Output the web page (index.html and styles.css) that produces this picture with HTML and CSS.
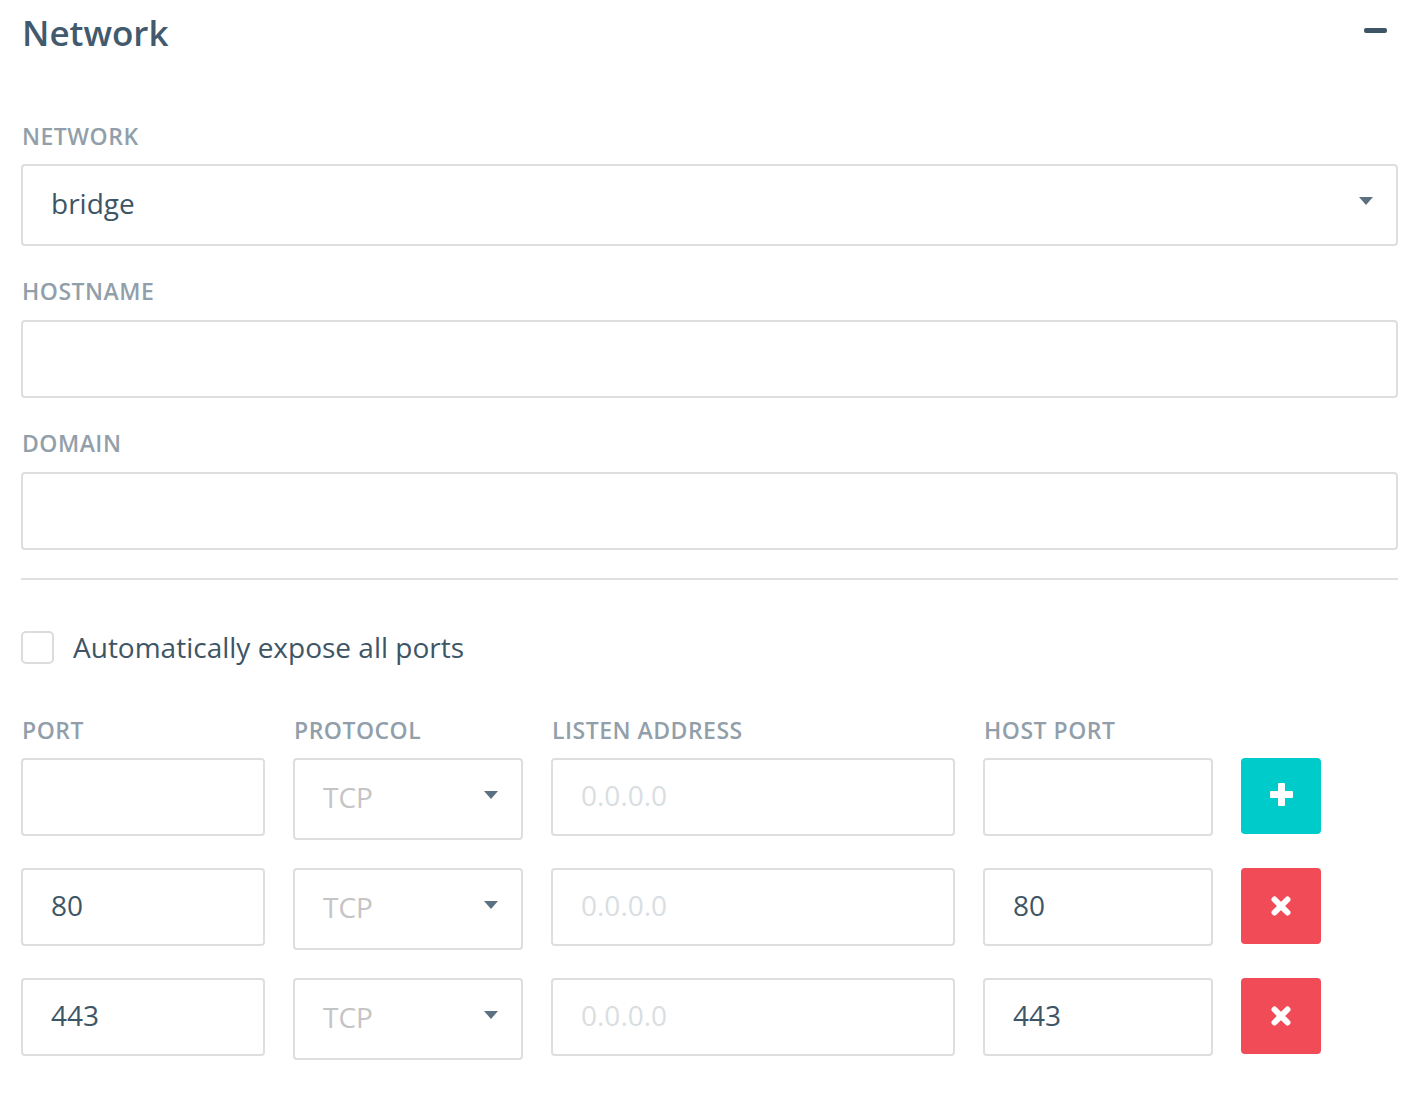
FILE: index.html
```html
<!DOCTYPE html>
<html>
<head>
<meta charset="utf-8">
<link rel="stylesheet" href="styles.css">
</head>
<body>
<div class="panel">
  <div class="panel-head">
    <h1 class="title">Network</h1>
    <span class="collapse"></span>
  </div>

  <div class="field first">
    <label class="label">NETWORK</label>
    <div class="control select-lg">
      <span class="value">bridge</span>
      <span class="caret"></span>
    </div>
  </div>

  <div class="field">
    <label class="label">HOSTNAME</label>
    <div class="control"></div>
  </div>

  <div class="field">
    <label class="label">DOMAIN</label>
    <div class="control"></div>
  </div>

  <hr class="sep">

  <div class="check-row">
    <span class="checkbox"></span>
    <span class="check-text">Automatically expose all ports</span>
  </div>

  <div class="port-head">
    <div class="label">PORT</div>
    <div class="label">PROTOCOL</div>
    <div class="label">LISTEN ADDRESS</div>
    <div class="label">HOST PORT</div>
    <div></div>
  </div>

  <div class="port-row">
    <div class="control"></div>
    <div class="control proto"><span class="muted">TCP</span><span class="caret"></span></div>
    <div class="control"><span class="ph">0.0.0.0</span></div>
    <div class="control"></div>
    <div class="btn add"><svg viewBox="0 0 23 23" width="23" height="23"><rect x="8" y="0" width="7" height="23" rx="1" fill="#fff"/><rect x="0" y="8" width="23" height="7" rx="1" fill="#fff"/></svg></div>
  </div>

  <div class="port-row">
    <div class="control"><span class="value">80</span></div>
    <div class="control proto"><span class="muted">TCP</span><span class="caret"></span></div>
    <div class="control"><span class="ph">0.0.0.0</span></div>
    <div class="control"><span class="value">80</span></div>
    <div class="btn del"><svg viewBox="0 0 20 20" width="20" height="20"><path d="M3.5 3.5 16.5 16.5M16.5 3.5 3.5 16.5" stroke="#fff" stroke-width="6" stroke-linecap="round" fill="none"/></svg></div>
  </div>

  <div class="port-row">
    <div class="control"><span class="value">443</span></div>
    <div class="control proto"><span class="muted">TCP</span><span class="caret"></span></div>
    <div class="control"><span class="ph">0.0.0.0</span></div>
    <div class="control"><span class="value">443</span></div>
    <div class="btn del"><svg viewBox="0 0 20 20" width="20" height="20"><path d="M3.5 3.5 16.5 16.5M16.5 3.5 3.5 16.5" stroke="#fff" stroke-width="6" stroke-linecap="round" fill="none"/></svg></div>
  </div>
</div>
</body>
</html>
```

FILE: styles.css
```css
* { box-sizing: border-box; }
html, body { margin: 0; padding: 0; background: #fff; }
body {
  font-family: "Open Sans", "Liberation Sans", sans-serif;
  color: #3e5566;
}
.panel {
  width: 1398px;
  padding-left: 21px;
}
.panel-head {
  display: flex;
  justify-content: space-between;
  align-items: flex-start;
  padding-top: 9px;
}
.title {
  margin: 0 0 0 1px;
  font-size: 35px;
  font-weight: 600;
  line-height: 48px;
  color: #415a6d;
}
.collapse {
  display: block;
  width: 23px;
  height: 5px;
  border-radius: 2px;
  background: #3e5566;
  margin: 19px 11px 0 0;
}
.field { margin-top: 31px; }
.field.first { margin-top: 65px; }
.label {
  display: block;
  font-size: 23px;
  font-weight: 600;
  color: #929faa;
  line-height: 28px;
  padding-left: 1px;
  margin-bottom: 14px;
  letter-spacing: 0.5px;
}
.field:not(.first) .label { margin-bottom: 15px; }
.control {
  height: 78px;
  border: 2px solid #dedede;
  border-radius: 4px;
  display: flex;
  align-items: center;
  padding: 0 28px 4px;
  position: relative;
  background: #fff;
}
.select-lg { height: 82px; }
.value {
  font-size: 28px;
  color: #3e5566;
}
.caret {
  position: absolute;
  right: 23px;
  top: 50%;
  margin-top: -8px;
  width: 0; height: 0;
  border-left: 7px solid transparent;
  border-right: 7px solid transparent;
  border-top: 8px solid #5b7080;
}
.sep {
  border: 0;
  height: 2px;
  background: #e0e0e0;
  margin: 28px 0 0 0;
}
.check-row {
  display: flex;
  align-items: center;
  margin-top: 50px;
  height: 34px;
}
.checkbox {
  width: 33px;
  height: 33px;
  border: 2px solid #dcdcdc;
  border-radius: 5px;
  margin-right: 19px;
}
.check-text {
  font-size: 28px;
  color: #3e5566;
}
.port-head, .port-row {
  display: grid;
  grid-template-columns: 244px 230px 404px 230px 80px;
  column-gap: 28px;
  align-items: start;
}
.port-head { margin-top: 52px; }
.port-row + .port-row { margin-top: 28px; }
.proto { height: 82px; }
.muted { font-size: 28px; color: #c4c4c4; }
.ph { font-size: 28px; color: #d9dee3; }
.btn {
  width: 80px;
  height: 76px;
  border-radius: 4px;
  display: flex;
  align-items: center;
  justify-content: center;
}
.add { background: #00cbcb; }
.add svg { margin-top: -3px; }
.del { background: #f04b56; }
```
